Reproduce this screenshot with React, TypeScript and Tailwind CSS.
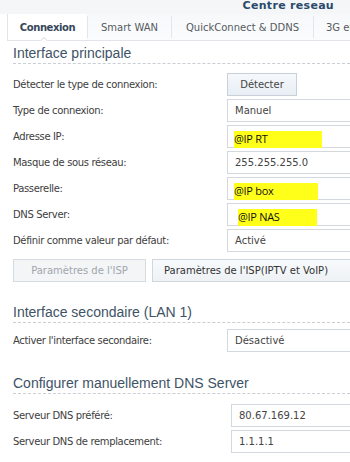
const labelFont = { fontFamily: '"DejaVu Sans", Verdana, sans-serif' };

type Row = { label: string; value: string; hl?: { w: string; pad: string } };

const mainRows: Row[] = [
  { label: "Type de connexion:", value: "Manuel" },
  { label: "Adresse IP:", value: "@IP RT", hl: { w: "w-[88px]", pad: "ml-[6px]" } },
  { label: "Masque de sous réseau:", value: "255.255.255.0" },
  { label: "Passerelle:", value: "@IP box", hl: { w: "w-[84px]", pad: "ml-[6px]" } },
  { label: "DNS Server:", value: "@IP NAS", hl: { w: "w-[79px]", pad: "ml-[10px]" } },
  { label: "Définir comme valeur par défaut:", value: "Activé" },
];

const Field = ({ row, left = "w-[214px]" }: { row: Row; left?: string }) => (
  <div className="flex items-center h-[23px]">
    <div className={`${left} shrink-0 text-[10px] tracking-[-0.35px] text-[#404040]`}>{row.label}</div>
    <div className="flex-1 h-full border border-[#d3d8de] bg-white flex items-center -mr-10">
      {row.hl ? (
        <div
          className={`${row.hl.w} ${row.hl.pad} h-[17px] mt-[6px] bg-[#ffff1a] flex items-center text-[11px] text-[#111] tracking-[-0.3px]`}
          style={{ fontFamily: '"Open Sans", "Liberation Sans", sans-serif' }}
        >
          {row.value}
        </div>
      ) : (
        <span className="pl-[7px] text-[10px] text-[#444]">{row.value}</span>
      )}
    </div>
  </div>
);

const Heading = ({ children }: { children: string }) => (
  <div className="pb-[2px] border-b border-dashed border-[#c9ced4]">
    <div
      className="text-[14px] leading-[16px] text-[#3e5366]"
      style={{ fontFamily: '"Liberation Sans", Arial, sans-serif' }}
    >
      {children}
    </div>
  </div>
);

export default function App() {
  return (
    <div className="w-[350px] h-[462px] overflow-hidden bg-white relative" style={labelFont}>
      {/* title */}
      <div className="h-[14px] bg-[#f4f6f8] relative">
        <div className="absolute right-[16px] top-0 text-[11px] leading-[12px] font-bold text-[#2b4a6b] tracking-[0.3px]">
          Centre reseau
        </div>
      </div>

      {/* tabs */}
      <div className="h-[27px] ml-[7px] bg-gradient-to-b from-[#f7f8fa] to-[#fbfcfd] border-l border-b border-[#e1e5e9] flex items-center relative text-[10px] text-[#555a60] whitespace-nowrap">
        <div className="w-[79px] shrink-0 flex justify-center font-bold text-[#36475a] tracking-[-0.4px] bg-white h-full items-center">
          Connexion
        </div>
        <div className="w-px shrink-0 h-[22px] bg-[#e3e6ea]" />
        <div className="w-[83px] shrink-0 flex justify-center">Smart WAN</div>
        <div className="w-px shrink-0 h-[22px] bg-[#e3e6ea]" />
        <div className="w-[141px] shrink-0 flex justify-center">QuickConnect &amp; DDNS</div>
        <div className="w-px shrink-0 h-[22px] bg-[#e3e6ea]" />
        <div className="pl-[12px] shrink-0">3G et 4G</div>
        <div className="absolute left-[32px] -bottom-px w-[8px] h-[5px] overflow-hidden">
          <div className="w-[6px] h-[6px] bg-white border-l border-t border-[#e1e5e9] rotate-45 mx-auto mt-[2px]" />
        </div>
      </div>

      <div className="pl-[13px] pt-[4px]">
        <Heading>Interface principale</Heading>

        <div className="flex flex-col gap-[3px] mt-[9px]">
          <div className="flex items-center h-[23px]">
            <div className="w-[214px] text-[10px] tracking-[-0.35px] text-[#404040]">Détecter le type de connexion:</div>
            <div className="w-[70px] h-full border border-[#c8d1da] bg-gradient-to-b from-[#f5f8fb] to-[#e8eef4] flex items-center justify-center text-[10px] text-[#444]">
              Détecter
            </div>
          </div>
          {mainRows.map((r) => (
            <Field key={r.label} row={r} />
          ))}
        </div>

        <div className="flex gap-[6px] mt-[7px] h-[23px] whitespace-nowrap">
          <div className="w-[133px] shrink-0 border border-[#d5dbe1] bg-[#f3f5f7] flex items-center justify-center text-[10px] text-[#a0a6ac]">
            Paramètres de l'ISP
          </div>
          <div className="shrink-0 w-[230px] border border-[#cfd6dd] bg-gradient-to-b from-[#f8fafc] to-[#eef2f5] flex items-center pl-[11px] text-[10px] text-[#333]">
            Paramètres de l'ISP(IPTV et VoIP)
          </div>
        </div>

        <div className="mt-[22px]">
          <Heading>Interface secondaire (LAN 1)</Heading>
        </div>
        <div className="mt-[6px]">
          <Field row={{ label: "Activer l'interface secondaire:", value: "Désactivé" }} />
        </div>

        <div className="mt-[23px]">
          <Heading>Configurer manuellement DNS Server</Heading>
        </div>
        <div className="flex flex-col gap-[3px] mt-[10px]">
          <Field left="w-[218px]" row={{ label: "Serveur DNS préféré:", value: "80.67.169.12" }} />
          <Field left="w-[218px]" row={{ label: "Serveur DNS de remplacement:", value: "1.1.1.1" }} />
        </div>
      </div>
    </div>
  );
}
